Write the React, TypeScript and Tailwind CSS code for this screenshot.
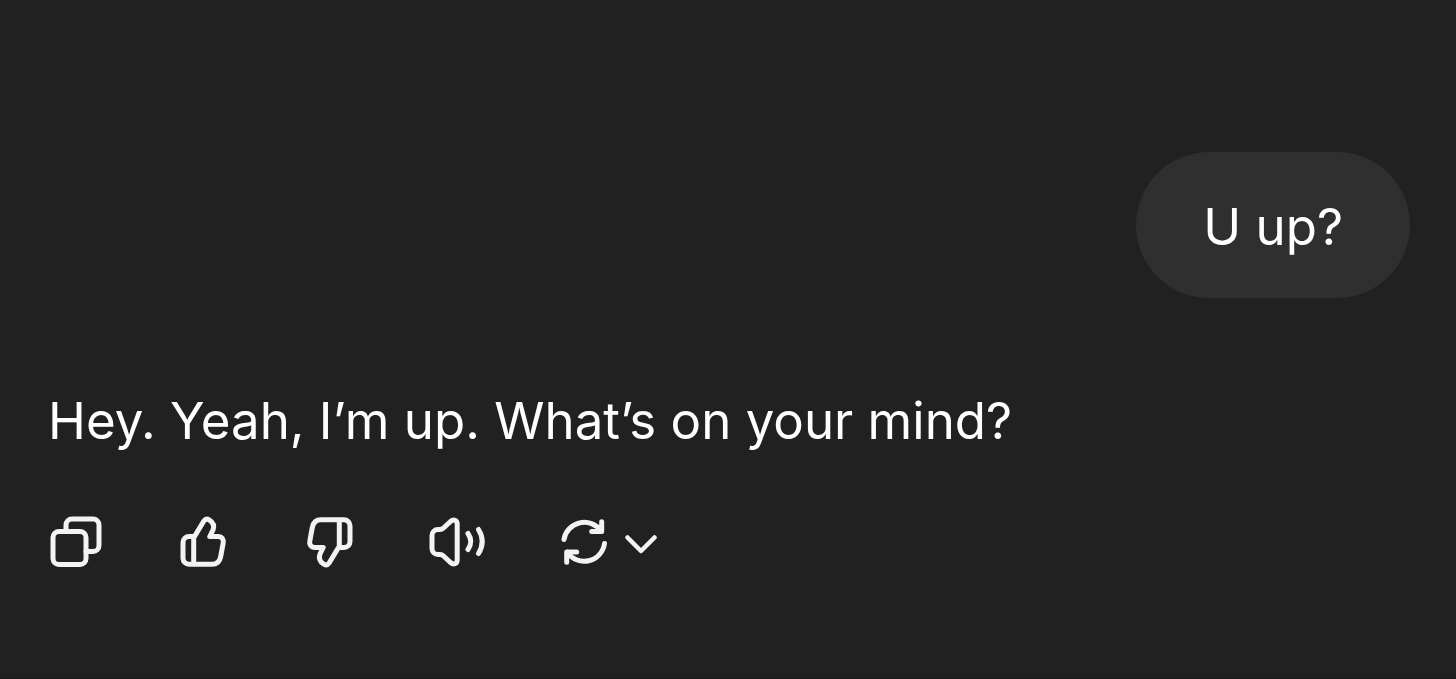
import type { ReactNode } from 'react';

function Icon({ children, narrow = false }: { children: ReactNode; narrow?: boolean }) {
  return (
    <svg
      viewBox={narrow ? '0 0 32 64' : '0 0 64 64'}
      className={narrow ? 'w-8 h-16' : 'w-16 h-16'}
      fill="none"
      stroke="currentColor"
      strokeWidth="5"
      strokeLinecap="round"
      strokeLinejoin="round"
      aria-hidden="true"
    >
      {children}
    </svg>
  );
}

const THUMB = 'M23.5 26.5 L33 10.8 Q35 7.9 38.2 9.8 C42.5 12.5 43.5 16 42 20 L38.8 26.5 H47 C51 26.5 53 29.5 52.2 33 L49.7 46.5 Q48.3 54.3 41 54.3 H18 A6 6 0 0 1 12 48.3 V32.5 A6 6 0 0 1 18 26.5 Z M22.7 27 V54';

const ACTIONS = [
  {
    label: 'Copy',
    icon: (
      <>
        <rect x="9" y="21.5" width="33" height="33" rx="6" />
        <path d="M22 21.5 V15 A6 6 0 0 1 28 9 H49 A6 6 0 0 1 55 15 V35.5 A6 6 0 0 1 49 41.5 H42" />
      </>
    ),
  },
  { label: 'Good response', icon: <path d={THUMB} /> },
  { label: 'Bad response',  icon: <path d={THUMB} transform="rotate(180 32 32)" /> },
  {
    label: 'Read aloud',
    icon: (
      <path d="M13 19.5 H15 Q17 19.5 18.5 18 L25.5 11.5 C28.5 9 32.2 10 32.2 14 V50 C32.2 54 28.5 55 25.5 52.5 L18.5 46 Q17 44.5 15 44.5 H13 A6 6 0 0 1 7 38.5 V25.5 A6 6 0 0 1 13 19.5 Z M43 23.5 Q48.5 31.5 43 39.5 M53.5 19.5 Q61 31.5 53.5 43.5" />
    ),
  },
];

export default function App() {
  return (
    <div className="min-h-screen bg-[#212121] border-b border-[#181818] text-white font-['Inter',sans-serif] text-[51px] leading-[82px]">
      <main className="flex flex-col pt-[152px] pl-11 pr-[46px]">

        {/* User message */}
        <div className="self-end rounded-[73px] bg-[#2f2f2f] px-[67px] pt-[34px] pb-[30px]">
          <p>U up?</p>
        </div>

        {/* Reply */}
        <p className="mt-[82px] pl-1">Hey. Yeah, I’m up. What’s on your mind?</p>

        {/* Action bar */}
        <div className="mt-12 flex items-center gap-[63px] text-[#f3f3f3]">
          {ACTIONS.map(a => (
            <button key={a.label} type="button" aria-label={a.label}>
              <Icon>{a.icon}</Icon>
            </button>
          ))}
          <button type="button" aria-label="Try again" className="flex items-center gap-[9px]">
            <Icon>
              <path d="M12 29.5 A20.5 20.5 0 0 1 49 21 M49.7 11.7 V21.5 H39.7 M52.5 33.5 A20.5 20.5 0 0 1 15 42 M24.7 42 H14.7 V52.3" />
            </Icon>
            <Icon narrow>
              <path d="M2.5 27.5 L16 41 L29.5 27.5" strokeWidth="4.5" />
            </Icon>
          </button>
        </div>

      </main>
    </div>
  );
}
